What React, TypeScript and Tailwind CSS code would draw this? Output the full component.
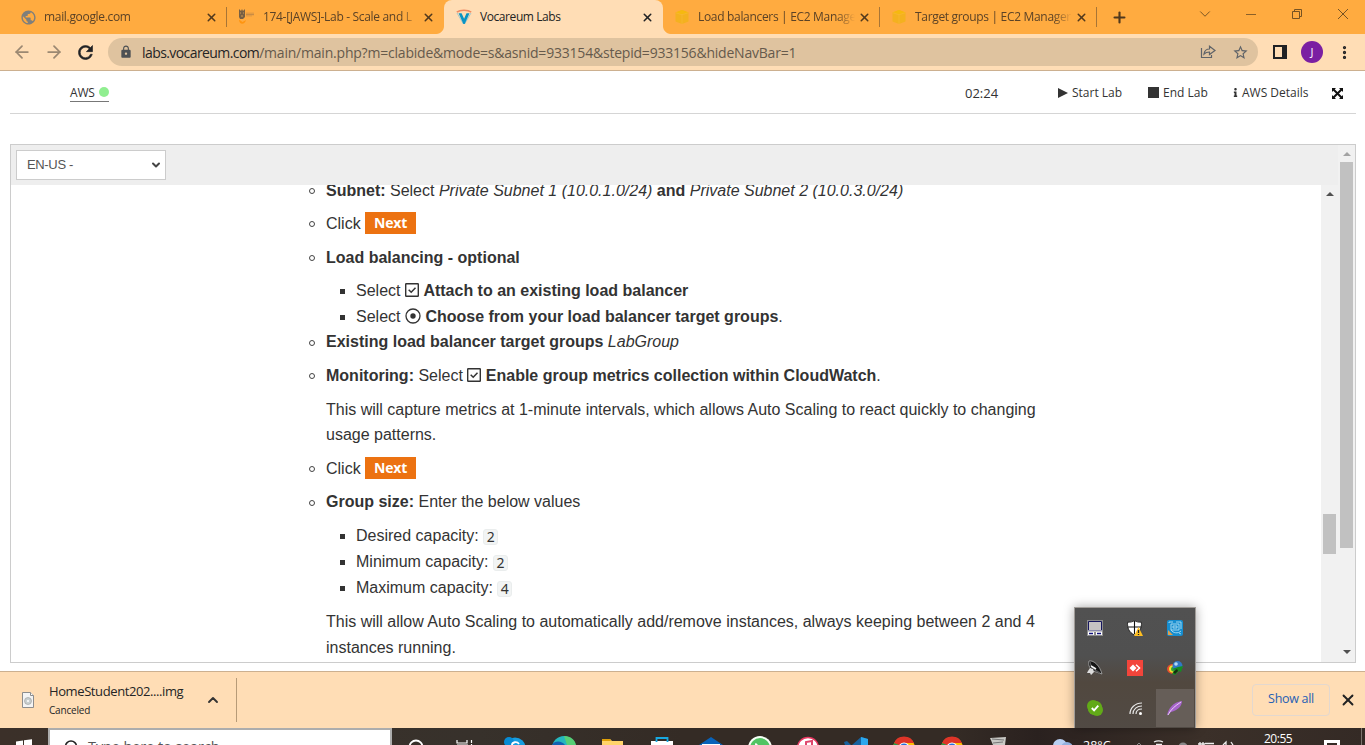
import React from "react";
import { ArrowLeft, ArrowRight, X, Plus, ChevronDown, ChevronUp, MoreVertical } from "lucide-react";
import { MdLock, MdStarBorder, MdPublic } from "react-icons/md";
import { FaInfo } from "react-icons/fa";

const ui = "font-['Open_Sans','Noto_Sans',sans-serif]";

function AwsCube() {
  return (
    <svg viewBox="0 0 16 16" className="h-4 w-4">
      <path d="M8 1l6.500 2.400v9L8 15l-6.500-2.600v-9z" fill="#f4b11f" />
      <path d="M8 1l6.500 2.400L8 5.500 1.500 3.400z" fill="#f6b90f" />
      <path d="M8 5.500V15M2 3.800l6 2 6-2" stroke="#f9b93a" strokeWidth=".6" fill="none" />
    </svg>
  );
}

function VocareumLogo() {
  return (
    <svg viewBox="0 0 16 16" className="h-4 w-4">
      <path d="M.8 3.200C4 .6 12 .6 15.200 3.200" stroke="#f08a62" strokeWidth="1.500" fill="none" />
      <path d="M1 4l6.400 11M15 4L8.600 15" stroke="#9ec5cd" strokeWidth=".9" />
      <path d="M2.600 4.300h3l2.500 5.400 2.400-5.400h3L8.700 15H7.400z" fill="#0a94c4" />
    </svg>
  );
}

function JawsLogo() {
  return (
    <svg viewBox="0 0 18 16" className="h-4 w-[18px]">
      <path d="M1 0l2 2 1-2 1 2 2-2v8l-2 2H2L1 8z" fill="#776044" />
      <path d="M2 4h1M5 4h1M3 7h2" stroke="#d39b53" />
      <path d="M9 3.500v4M11 3.500v4M13 3.500v4M15 3.500v3M8 5.500h8" stroke="#c98c45" strokeWidth="1" />
      <path d="M1 10.500c0 5.500 6 5.500 7 .5l-3.500 2z" fill="#ff9510" />
    </svg>
  );
}

function Tab({ icon, title, width, pad, sep }: { icon: React.ReactNode; title: string; width: string; pad: string; sep?: boolean }) {
  return (
    <div className={`flex h-[34px] shrink-0 items-center ${width} ${pad} pr-[9px] ${sep ? "relative" : ""}`}>
      <span className="flex w-[18px] shrink-0 justify-center">{icon}</span>
      <span className="ml-[7px] flex-1 overflow-hidden text-[12px] leading-4 tracking-[-0.320px] whitespace-nowrap text-[#5b4226] [mask-image:linear-gradient(to_right,black_88%,transparent)]">{title}</span>
      <X size={13} strokeWidth={2.800} color="#51391d" className="ml-[3px] shrink-0" />
      {sep && <i className="absolute top-[7px] right-0 h-5 w-px bg-[#a87536]" />}
    </div>
  );
}

function TabStrip() {
  return (
    <div className="flex h-[34px] shrink-0 bg-[#ffab40]">
      <Tab width="w-[227px]" pad="pl-[19px]" icon={<MdPublic size={17} color="#7f7f7b" />} title="mail.google.com" sep />
      <Tab width="w-[217px]" pad="pl-[11px]" icon={<JawsLogo />} title="174-[JAWS]-Lab - Scale and L" />
      <div className="relative flex h-[34px] w-[219px] shrink-0 items-center rounded-t-[8px] bg-[#ffddb5] pr-[9px] pl-3">
        <i className="absolute bottom-0 -left-2 h-2 w-2 bg-[radial-gradient(circle_at_top_left,#ffab40_7.5px,#ffddb5_8.5px)]" />
        <i className="absolute -right-2 bottom-0 h-2 w-2 bg-[radial-gradient(circle_at_top_right,#ffab40_7.5px,#ffddb5_8.5px)]" />
        <VocareumLogo />
        <span className="ml-2 flex-1 text-[12px] leading-4 tracking-[-0.420px] whitespace-nowrap text-[#232323]">Vocareum Labs</span>
        <X size={13} strokeWidth={2.800} color="#202124" />
      </div>
      <Tab width="w-[217px]" pad="pl-[10px]" icon={<AwsCube />} title="Load balancers | EC2 Manage" sep />
      <Tab width="w-[217px]" pad="pl-[10px]" icon={<AwsCube />} title="Target groups | EC2 Manager" sep />
      <div className="flex flex-1 items-center pl-[14px]">
        <Plus size={17} strokeWidth={3} color="#51391d" />
      </div>
      <div className="flex h-7 items-center text-[#765323]">
        <div className="flex w-[46px] justify-center"><ChevronDown size={18} strokeWidth={1.300} /></div>
        <div className="flex w-[46px] justify-center"><i className="h-px w-[10px] bg-[#8b6028]" /></div>
        <div className="flex w-[46px] justify-center">
          <svg viewBox="0 0 10 10" className="h-[10px] w-[10px]" fill="none" stroke="#765323"><path d="M.5 2.500h7v7h-7zM2.500 2.500v-2h7v7h-2" /></svg>
        </div>
        <div className="flex w-[45px] justify-center">
          <svg viewBox="0 0 10 10" className="h-[10px] w-[10px]" stroke="#765323"><path d="M0 0l10 10M10 0L0 10" /></svg>
        </div>
      </div>
    </div>
  );
}

function AddressBar() {
  return (
    <div className="flex h-[37px] shrink-0 items-center border-b border-[#ccb090] bg-[#ffddb5]">
      <ArrowLeft size={20} strokeWidth={2.100} color="#9b8872" className="ml-3" />
      <ArrowRight size={20} strokeWidth={2.100} color="#9b8872" className="ml-3" />
      <svg viewBox="0 0 24 24" className="ml-[11px] h-[21px] w-[21px]">
        <path d="M17.650 6.350A7.958 7.958 0 0 0 12 4c-4.420 0-7.990 3.580-7.990 8s3.570 8 7.990 8c3.730 0 6.840-2.550 7.730-6h-2.080A5.990 5.990 0 0 1 12 18c-3.310 0-6-2.690-6-6s2.690-6 6-6c1.660 0 3.140.69 4.220 1.780L13 11h7V4l-2.350 2.350z" fill="#202124" stroke="#202124" strokeWidth=".7" />
      </svg>
      <div className="ml-[12px] flex h-7 w-[1150px] items-center rounded-full bg-[#dfc39f] pr-[9px] pl-[11px]">
        <MdLock size={14} color="#4d5053" />
        <span className="ml-[9px] flex-1 text-[14px] tracking-[-0.210px] whitespace-nowrap text-[#665a4c]">
          <span className="tracking-[-0.580px] text-[#252525]">labs.vocareum.com</span>/main/main.php?m=clabide&amp;mode=s&amp;asnid=933154&amp;stepid=933156&amp;hideNavBar=1
        </span>
        <svg viewBox="0 0 16 16" className="mr-4 h-4 w-4" fill="none" stroke="#5f6368" strokeWidth="1.200">
          <path d="M1.500 4v9.500h10V11M4 10c.5-3.500 2.500-5 5.500-5V2.300L15 6.500 9.500 10.500V8C7 8 5.500 8.500 4 10z" />
        </svg>
        <MdStarBorder size={17} color="#5f6368" />
      </div>
      <div className="ml-[15px] h-[14px] w-[14px] border-2 border-r-[5px] border-[#202124]" />
      <div className="ml-[14px] flex h-[22px] w-[22px] items-center justify-center rounded-full bg-[#7b1fa2] text-[11px] text-white">J</div>
      <MoreVertical size={17} strokeWidth={2.600} color="#202124" className="ml-[13px]" />
    </div>
  );
}

function LabHeader() {
  return (
    <div className="mr-[9px] ml-[10px] flex h-[43px] shrink-0 border-b border-[#d5d5d5] text-[12px] text-[#333]">
      <div className="mr-auto ml-[60px] flex h-[31px] w-[39px] items-end">
        <div className="flex h-[19px] w-full items-center justify-between border-b border-[#777]">
          <span className="pt-[2px] tracking-[-0.150px]">AWS</span>
          <i className="h-[10px] w-[10px] rounded-full bg-[#90ee90]" />
        </div>
      </div>
      <div className="flex h-[43px] w-[391px] items-center">
        <span className="w-[93px] pt-[2px] text-[13px]">02:24</span>
        <span className="flex w-[90px] items-center">
          <svg viewBox="0 0 10 10" className="mr-[4px] h-[10px] w-[10px]" fill="#333"><path d="M0 0l10 5-10 5z" /></svg>Start Lab
        </span>
        <span className="flex w-[83px] items-center"><i className="mr-[4px] h-[11px] w-[11px] bg-[#333]" />End Lab</span>
        <span className="flex w-[101px] items-center"><FaInfo size={9} className="mr-[2px]" />AWS Details</span>
        <svg viewBox="0 0 11 11" className="mt-[2px] h-[11px] w-[11px] shrink-0" fill="#111">
          <path d="M0 0h4L0 4zM11 0v4L7 0zM0 11V7l4 4zM11 11H7l4-4z" />
          <path d="M1.500 1.500l8 8M9.500 1.500l-8 8" stroke="#111" strokeWidth="2" />
        </svg>
      </div>
    </div>
  );
}

function CheckBox() {
  return (
    <svg viewBox="0 0 14 14" className="inline h-[14px] w-[14px] align-[-1px]" fill="none" stroke="#333">
      <rect x=".7" y=".7" width="12.600" height="12.600" rx=".5" strokeWidth="1.400" />
      <path d="M3.700 6.800l2.500 2.500 4.300-4.500" strokeWidth="1.500" />
    </svg>
  );
}

function Radio() {
  return (
    <svg viewBox="0 0 16 16" className="inline h-4 w-4 align-[-2px]" fill="none" stroke="#333">
      <circle cx="8" cy="8" r="7" strokeWidth="1.300" />
      <circle cx="8" cy="8" r="2.700" fill="#333" stroke="none" />
    </svg>
  );
}

function Item({ children, tight }: { children: React.ReactNode; tight?: boolean }) {
  return (
    <li className={`flex ${tight ? "" : "mb-2"}`}>
      <i className="mt-[10.200px] mr-[11px] ml-[-17px] h-[6px] w-[6px] shrink-0 rounded-full border border-[#444]" />
      <div>{children}</div>
    </li>
  );
}

function SubItem({ children, tall }: { children: React.ReactNode; tall?: boolean }) {
  return (
    <li className={`flex ${tall ? "h-[26px]" : "h-[25.600px]"}`}>
      <i className="mt-[11px] mr-[11px] ml-[14px] h-[5px] w-[5px] shrink-0 bg-[#333]" />
      <div>{children}</div>
    </li>
  );
}

const Next = () => (
  <span className="inline-block h-[22px] w-[51px] bg-[#ec7211] text-center align-[1px] font-['Open_Sans'] text-[14px] leading-[22px] font-bold tracking-[-0.200px] text-white">Next</span>
);

const Code = ({ children }: { children: React.ReactNode }) => (
  <code className="inline-block h-4 w-[15px] rounded-[3px] border border-[#eaeded] bg-[#f2f4f4] text-center align-[-1px] font-['Noto_Sans'] text-[14px] leading-[13px]">{children}</code>
);

function Instructions() {
  return (
    <ul className="-mt-[7.500px] ml-[315px] w-[730px] font-['Liberation_Sans',sans-serif] text-[16px] leading-[25.600px] text-[#333]">
      <Item><b>Subnet:</b> Select <em>Private Subnet 1 (10.0.1.0/24)</em> <b>and</b> <em>Private Subnet 2 (10.0.3.0/24)</em></Item>
      <Item><div className="h-[25.600px]">Click <Next /></div></Item>
      <Item tight>
        <b>Load balancing - optional</b>
        <ul className="mt-2">
          <SubItem>Select <CheckBox /> <b>Attach to an existing load balancer</b></SubItem>
          <SubItem>Select <Radio /> <b>Choose from your load balancer target groups</b>.</SubItem>
        </ul>
      </Item>
      <Item><b>Existing load balancer target groups</b> <em>LabGroup</em></Item>
      <Item>
        <b>Monitoring:</b> Select <CheckBox /> <b>Enable group metrics collection within CloudWatch</b>.
        <p className="mt-2">This will capture metrics at 1-minute intervals, which allows Auto Scaling to react quickly to changing usage patterns.</p>
      </Item>
      <Item><div className="h-[25.600px]">Click <Next /></div></Item>
      <Item>
        <b>Group size:</b> Enter the below values
        <ul className="mt-2">
          <SubItem tall>Desired capacity: <Code>2</Code></SubItem>
          <SubItem tall>Minimum capacity: <Code>2</Code></SubItem>
          <SubItem tall>Maximum capacity: <Code>4</Code></SubItem>
        </ul>
        <p className="mt-2">This will allow Auto Scaling to automatically add/remove instances, always keeping between 2 and 4 instances running.</p>
      </Item>
    </ul>
  );
}

const Arrow = ({ up, dim }: { up?: boolean; dim?: boolean }) => (
  <svg viewBox="0 0 8 4" className="h-1 w-2" fill={dim ? "#a3a3a3" : "#505050"}>
    <path d={up ? "M4 0l4 4H0z" : "M0 0h8L4 4z"} />
  </svg>
);

function LabFrame() {
  return (
    <div className="mt-[30px] mr-[9px] ml-[10px] flex h-[519px] shrink-0 border border-[#ccc]">
      <div className="flex flex-1 flex-col">
        <div className="flex h-10 shrink-0 items-center bg-[#eee] pl-[5px]">
          <div className="flex h-[30px] w-[150px] items-center justify-between border border-[#ccc] bg-white pr-[3px] pl-[10px] font-['Liberation_Sans'] text-[13px] tracking-[-0.350px] text-[#555]">
            <span>EN-US -</span>
            <ChevronDown size={12} strokeWidth={4} color="#444" />
          </div>
        </div>
        <div className="flex h-[477px] overflow-hidden bg-white">
          <div className="flex-1 overflow-hidden"><Instructions /></div>
          <div className="flex w-[17px] flex-col items-center bg-[#f1f1f1] pt-[7px]">
            <Arrow up />
            <i className="mt-[318px] h-10 w-[13px] bg-[#c1c1c1]" />
          </div>
        </div>
      </div>
      <div className="flex w-[17px] flex-col items-center bg-[#f1f1f1] pt-[7px] pb-[8px]">
        <Arrow up dim />
        <i className="mt-[6px] mb-auto h-[386px] w-[13px] bg-[#c1c1c1]" />
        <Arrow />
      </div>
    </div>
  );
}

function DownloadBar() {
  return (
    <div className="mt-2 flex h-[57px] shrink-0 items-center border-t border-[#ccb090] bg-[#ffddb5]">
      <svg viewBox="0 0 12 16" className="ml-[22px] h-4 w-3">
        <path d="M.5.5h8l3 3v12H.5z" fill="#f4f4f4" stroke="#8d8d8d" />
        <path d="M8.500.5v3h3" fill="#fff" stroke="#8d8d8d" />
        <circle cx="6" cy="9" r="3.500" fill="#c9cfd0" stroke="#999" strokeWidth=".6" /><circle cx="6" cy="9" r="1" fill="#fff" />
      </svg>
      <div className="ml-[15px] w-[156px]">
        <div className="text-[13px] leading-[20px] tracking-[-0.400px] text-[#252525]">HomeStudent202....img</div>
        <div className="text-[10px] leading-[19px] tracking-[-0.200px] text-[#252525]">Canceled</div>
      </div>
      <ChevronUp size={16} strokeWidth={2.800} color="#333" />
      <i className="ml-[15px] h-11 w-px bg-[#b79b78]" />
      <div className="mr-[9px] ml-auto flex h-8 w-[78px] items-center justify-center rounded-[4px] border border-[#e3d8cf] pb-px text-[12.500px] tracking-[-0.300px] text-[#2660b4]">Show all</div>
      <X size={18} strokeWidth={2.500} color="#222" className="mr-[8px]" />
    </div>
  );
}

function Slot({ children, className }: { children: React.ReactNode; className: string }) {
  return (
    <span className={`flex h-[17px] shrink-0 justify-center overflow-hidden ${className}`}>
      <svg viewBox="0 0 24 17" className="h-[17px] w-6 shrink-0">{children}</svg>
    </span>
  );
}

function Chrome() {
  return (
    <Slot className="w-[48px]">
      <circle cx="12" cy="20" r="11" fill="#fbbc05" />
      <path d="M2 15A11 11 0 0 1 22 15H12L8 20z" fill="#df3428" />
      <path d="M2 15l5 2v4H1z" fill="#259b48" />
      <circle cx="12" cy="20" r="5.500" fill="#fff" /><circle cx="12" cy="20" r="4.500" fill="#2970d9" />
    </Slot>
  );
}

function Taskbar() {
  return (
    <div className="flex h-[17px] shrink-0 overflow-hidden bg-[linear-gradient(90deg,#3b3029_0%,#37312b_35%,#342b25_50%,#342b25_70%,#2a211f_76%,#3b3029_88%,#342a25_100%)] text-white">
      <Slot className="w-12"><path d="M4 13.500l7-1V17H4zM12 12.300l8-1V17h-8z" fill="#fff" /></Slot>
      <div className="flex h-[40px] w-[344px] shrink-0 border-2 border-[#adadad] bg-white pl-[13px] text-[#555]">
        <svg viewBox="0 0 16 16" className="mt-[10px] h-4 w-4" fill="none" stroke="#222" strokeWidth="1.500"><circle cx="8" cy="6.500" r="5.500" /><path d="M4 10l-4 5" /></svg>
        <span className="mt-[7px] ml-[9px] text-[14.500px] leading-5 tracking-[-0.100px] whitespace-nowrap">Type here to search</span>
      </div>
      <Slot className="w-[48px]"><circle cx="12" cy="19" r="6.500" fill="none" stroke="#fff" strokeWidth="1.800" /></Slot>
      <Slot className="w-[49px]"><path d="M4 12v3h10v-3M4 17h11M18.500 12v3M18.500 16v1" fill="none" stroke="#fff" strokeWidth="1.200" /></Slot>
      <Slot className="w-[51px]"><circle cx="12" cy="20" r="10.500" fill="#169de0" /><circle cx="6" cy="14" r="5" fill="#078bd4" /><path d="M16 16c-2-3-7-2-7 1" fill="none" stroke="#fff" strokeWidth="1.800" /></Slot>
      <Slot className="w-[48px]"><circle cx="12" cy="20" r="12" fill="#25b7be" /><path d="M12 8c7 0 11 4 12 9h-9z" fill="#56cf76" /><path d="M0 17c3-5 10-4 13 0z" fill="#1261b2" /></Slot>
      <Slot className="w-[49px]"><path d="M1 11h8l2 2h11v4H1z" fill="#ffd46a" /><path d="M1 11h8l1 2H1z" fill="#dfa008" /></Slot>
      <Slot className="w-[49px]"><path d="M1 13h22v4H1z" fill="#fff" /><path d="M6.500 14v-4h11v4" fill="none" stroke="#18a9e1" strokeWidth="1.800" /></Slot>
      <Slot className="w-[50px]"><path d="M0 17L12 9l12 8z" fill="#0862b9" /><path d="M3 16h18v1H3z" fill="#fff" /></Slot>
      <Slot className="w-[48px]"><circle cx="12" cy="20" r="12" fill="#f6fff6" /><circle cx="12" cy="20" r="10" fill="#51c463" /><path d="M8 15c-1 0-1 2-1 2h3z" fill="#fff" /></Slot>
      <Slot className="w-[48px]"><circle cx="12" cy="20" r="10.500" fill="#fff" stroke="#e83962" strokeWidth="1.500" /><path d="M10 17v-3l6-1v4" fill="none" stroke="#df466d" strokeWidth="2" /></Slot>
      <Slot className="w-[48px]"><path d="M0 14l3-1 4 4H1zM8 17l9-8 7 2v6z" fill="#16629f" /><path d="M17 9l7 2v6h-7z" fill="#2ba7ed" /></Slot>
      <Chrome />
      <Chrome />
      <Slot className="mr-[34px] w-[44px]"><path d="M4 10l16-1-1 8H7z" fill="#c8c8c4" /><path d="M6 11l12 1M7 15l10-1" stroke="#777" /></Slot>
      <svg viewBox="0 0 22 17" className="ml-[-3px] h-[17px] w-[22px] shrink-0"><circle cx="9" cy="18" r="7" fill="#b8cff2" /><circle cx="16" cy="20" r="6" fill="#92b1df" /></svg>
      <span className="mt-[10px] ml-[10px] w-[53px] shrink-0 text-[12.500px] leading-[16px]">28°C</span>
      <svg viewBox="0 0 105 17" className="h-[17px] w-[105px] shrink-0" fill="none" stroke="#eee">
        <path d="M1 17l2-2 2 2" stroke="#888" />
        <path d="M18 14c3-1.500 6-1.500 9 0M20 16.500h6M64 14v3M67 14v3M62 16h7M69 15.500h9M87 17l3-3v3M95 14l2 3" strokeWidth="1.300" />
        <circle cx="47" cy="19" r="4.500" fill="#888" stroke="none" />
      </svg>
      <span className="mt-[3px] ml-[23px] w-[60px] shrink-0 text-[12px] leading-[15px] tracking-[-0.500px]">20:55</span>
      <i className="mt-[12px] h-5 w-4 shrink-0 border-[3px] border-white" />
      <i className="ml-auto h-full w-px bg-[#7c746d]" />
      <i className="w-[3px]" />
    </div>
  );
}

function Cell({ children, active }: { children: React.ReactNode; active?: boolean }) {
  return (
    <div className="flex h-10 w-10 items-center justify-center">
      <div className={`flex h-[38px] w-[38px] items-center justify-center ${active ? "bg-[#665e58]" : ""}`}>
        <svg viewBox="0 0 16 16" className="h-4 w-4">{children}</svg>
      </div>
    </div>
  );
}

function TrayPopup() {
  return (
    <div className="absolute top-[607px] left-[1074px] flex h-[121px] w-[122px] flex-wrap content-start border border-b-0 border-[#a09c98] bg-[linear-gradient(#515151_0%,#505050_40%,#51483f_62%,#514a44_100%)] shadow-[0_0_10px_rgba(0,0,0,0.35)]">
      <Cell><path d="M0 0h16v16H0z" fill="#8c8c8c" /><path d="M1.500 1.500h13v9h-13z" fill="#c6c3c3" stroke="#16165f" /><path d="M1 11h14" stroke="#fff" /><path d="M1 12h6v3H1zM9 12h6v3H9z" fill="#fff" /><path d="M2 13.500h4M10 13.500h4" stroke="#11117d" strokeWidth="1.400" /></Cell>
      <Cell><path d="M7.500.6c2 1.300 4 1.700 7 1.700 0 5.500-1 9.500-7 12.700C1.500 12 .5 8 .5 2.300 3.500 2.300 5.500 1.900 7.500.6z" fill="#fff" stroke="#111" strokeWidth=".8" /><path d="M7.500 1v13M1 7h13" stroke="#111" strokeWidth="1.100" /><path d="M11.500 7l4.500 9H7z" fill="#ffbf21" /><path d="M11.500 10v3M11.500 14v1" stroke="#222" strokeWidth="1.300" /></Cell>
      <Cell><rect width="16" height="16" rx="2" fill="#168dcf" /><path d="M1 10l5 5H1z" fill="#e2a04b" /><path d="M4 4h8v6H4zM6 6h4v2H6zM2 3V2h4M9 2h5v7M14 11c-3 3-8 2-10-1M12 13l2 1" fill="none" stroke="#abdff5" strokeWidth=".9" /></Cell>
      <Cell><path d="M2 1c5-1 11 5 13 13l-9-3C2 8 1 4 2 1z" fill="#151515" stroke="#aaa" strokeWidth=".8" /><path d="M3 2c0 4 4 8 10 11" fill="none" stroke="#555" strokeWidth="1.500" /><path d="M3 8l3 1 1 3-3 3-1-2H0l1-2z" fill="#ddd" /><path d="M4 6l5 3" stroke="#f3f3f3" strokeWidth="1.500" /></Cell>
      <Cell><path d="M0 0h16v16H0z" fill="#f3453b" /><path d="M6 4.500L9.500 8 6 11.500 2.500 8z" fill="#fff" /><path d="M9 4.800L12.500 8 9 11.200" fill="none" stroke="#fff" strokeWidth="1.500" /></Cell>
      <Cell><ellipse cx="6" cy="9" rx="6" ry="5" fill="#e8502c" /><ellipse cx="6.500" cy="9" rx="4.500" ry="3.700" fill="#e9e733" /><ellipse cx="7" cy="9" rx="3" ry="2.500" fill="#39a536" /><circle cx="10.500" cy="6" r="5" fill="#3079c5" /><circle cx="9" cy="4" r="1.800" fill="#b5d9f5" /><path d="M5 9l6-2 5-1-2 6-2-1-4 4-3-1 3-4z" fill="#168c22" /><path d="M6 12l4-3 1 2-3 3z" fill="#142d10" /></Cell>
      <Cell><circle cx="6" cy="6" r="6" fill="#62aa18" /><circle cx="10" cy="10" r="6" fill="#62aa18" /><circle cx="8" cy="8" r="7.300" fill="#62aa18" /><path d="M4.800 8l2.300 2.300 4.200-4.600" fill="none" stroke="#fff" strokeWidth="1.900" /></Cell>
      <Cell><path d="M3 14C3 8 8 3 15 3M6 14c0-5 4-8 9-8M9 14c0-3 2-5 6-5" fill="none" stroke="#e8e8e8" strokeWidth="1.200" /><circle cx="13.500" cy="13.500" r="1.500" fill="#fff" /></Cell>
      <Cell active><path d="M0 15.500C1 9 6 2 15 1c0 5-4 9-11 11z" fill="#a764cc" /><path d="M1 15C4 9 8 6 14 2" stroke="#ead0f6" fill="none" /></Cell>
    </div>
  );
}

export default function App() {
  return (
    <div className={`relative flex h-[745px] w-[1365px] flex-col overflow-hidden bg-white ${ui}`}>
      <TabStrip />
      <AddressBar />
      <LabHeader />
      <LabFrame />
      <DownloadBar />
      <Taskbar />
      <TrayPopup />
    </div>
  );
}
